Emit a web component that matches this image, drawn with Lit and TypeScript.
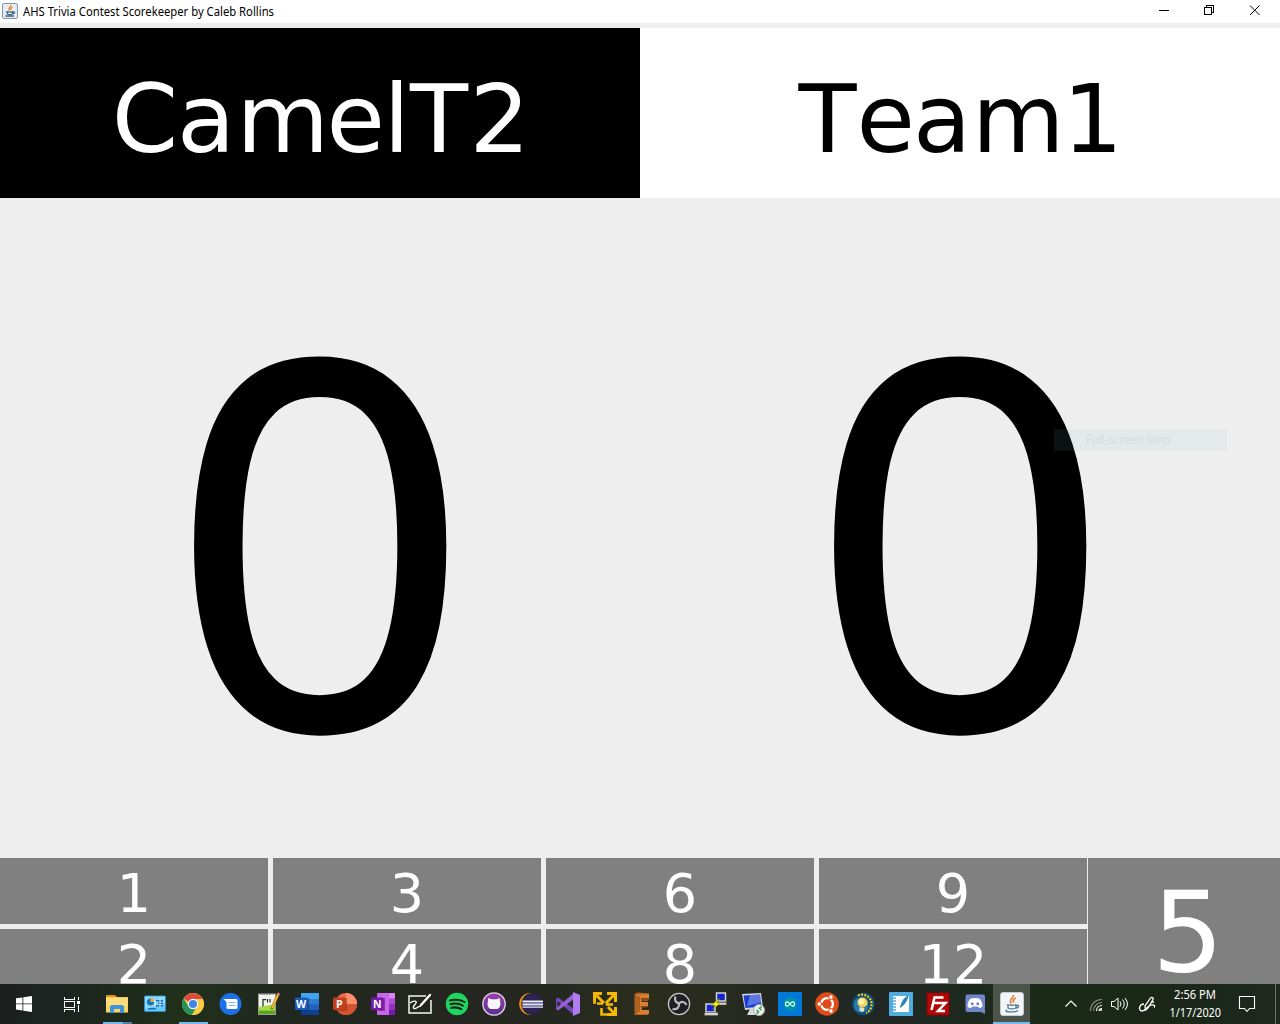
import { LitElement, html, svg, css } from "lit";
import { customElement, property } from "lit/decorators.js";

const icons: Record<string, unknown> = {
  explorer: svg`<path d="M1 3h9l2 2h10v4H1z" fill="#d99a12"/><path d="M1 5.500h22V20.500H1z" fill="#f9d568"/><path d="M1 5.500h22v8H1z" fill="#fddc7b"/><path d="M5 21v-6.500l1.500-1.500h11l1.500 1.500V21h-4v-4H9v4z" fill="#3b94d9"/>`,
  panel: svg`<rect x="1.500" y="4" width="21" height="15.500" rx="1" fill="#6bc8f5" stroke="#2d91cb"/><path d="M2 4.500h20v7L2 17z" fill="#9de0fc" opacity=".7"/><circle cx="7.500" cy="10" r="3.600" fill="#1674be"/><path d="M7.500 10V6.200a3.800 3.800 0 0 1 3.800 3.800z" fill="#f7a837"/><path d="M13 8h7v1.500h-7zm2 2.500h5V12h-5zM13 13h7v1.500h-7zM5 16h8v1.500H5z" fill="#1674be"/><path d="M12 7.500v7M17 7v8" stroke="#fff" stroke-width=".8"/>`,
  chrome: svg`<circle cx="12" cy="12" r="11" fill="#f8c940"/><path d="M12 12L2.500 6.400A11 11 0 0 1 21.600 7H12z" fill="#d94a40"/><path d="M2.500 6.400A11 11 0 0 0 11 23l5-8.500-8.500-.2z" fill="#24955a"/><path d="M12 7h9.600A11 11 0 0 1 11 23l5.300-8.500z" fill="#f9cc45"/><circle cx="12" cy="12" r="5.200" fill="#fff"/><circle cx="12" cy="12" r="4.100" fill="#4285e8"/>`,
  messages: svg`<circle cx="11.500" cy="12" r="11" fill="#1b72e8"/><path d="M4.500 7h12.500a1.500 1.500 0 0 1 1.500 1.500v7a1.500 1.500 0 0 1-1.500 1.500h-8a1.500 1.500 0 0 1-1.500-1.500V10z" fill="#fff"/><path d="M9.500 10.500h7M9.500 13.500h7" stroke="#8ab5f4" stroke-width="1.200"/>`,
  notepad: svg`<rect x="1.500" y="2" width="17" height="20.500" fill="#f2f4ee" stroke="#9ca197"/><path d="M2 15l16-3v10H2z" fill="#a7dc47"/><path d="M2 18.500h16V22H2z" fill="#58a81f"/><path d="M4 1v2m3-2v2m3-2v2m3-2v2" stroke="#777"/><path d="M6 7v7.500M6 7.700h3M10.500 7v3.500M13 7v3.500" stroke="#252b22" stroke-width="1.200"/><path d="M21.500 1.500L14.500 17" stroke="#8a6320" stroke-width="2.800"/><path d="M21 3L15 16" stroke="#f3bc2d" stroke-width="1.900"/><path d="M21.800 1l-.8 2" stroke="#e87878" stroke-width="2.800"/>`,
  word: svg`<rect x="6" y="1" width="18" height="22" rx="1" fill="#2160b8"/><path d="M6 1h18v6H6z" fill="#41a5ee"/><path d="M6 7h18v5.500H6z" fill="#2b7cd3"/><path d="M6 18h18v5H6z" fill="#103f91"/><path d="M7 6h7v13H7z" fill="#10366e" opacity=".6"/><rect x="0" y="5.500" width="12.500" height="12.500" rx="1" fill="#185abd"/><text x="6.200" y="15.600" text-anchor="middle">W</text>`,
  powerpoint: svg`<circle cx="13" cy="12" r="11" fill="#ed6c47"/><path d="M13 1a11 11 0 0 1 11 11H13z" fill="#ff8f6b"/><path d="M2 12h22a11 11 0 0 1-22 0z" fill="#d35230"/><path d="M5 6h9v13H5z" fill="#7e2815" opacity=".5"/><rect x="0" y="5.500" width="12.500" height="12.500" rx="1" fill="#c43e1c"/><text x="6.300" y="15.600" text-anchor="middle">P</text>`,
  onenote: svg`<rect x="6" y="1" width="18" height="22" rx="1" fill="#ca64ea"/><path d="M18 1h6v5.500h-6z" fill="#d982f0"/><path d="M18 6.500h6V12h-6z" fill="#ae4bd5"/><path d="M18 12h6v5.500h-6z" fill="#9332bf"/><path d="M18 17.500h6V23h-6z" fill="#7719aa"/><path d="M7 6h7v13H7z" fill="#58157e" opacity=".6"/><rect x="0" y="5.500" width="12.500" height="12.500" rx="1" fill="#7719aa"/><text x="6.300" y="15.600" text-anchor="middle">N</text>`,
  whiteboard: svg`<path d="M18 4H1v17h22V8" fill="none" stroke="#f5f5f5" stroke-width="1.500"/><path d="M2 11c4-3 7-2 6 0-1 2-4 4-2 5.500 2 1 4-2.500 7-2.500" fill="none" stroke="#fff" stroke-width="1.400"/><path d="M22 3l-9 10" stroke="#fff" stroke-width="2.400" stroke-linecap="round"/>`,
  spotify: svg`<circle cx="12" cy="12" r="11.200" fill="#1fd660"/><path d="M5 8.500c5-1.500 10-1 14.500 1.500M5.500 12.300c4.500-1.300 8.500-.8 12.300 1.400M6.200 15.900c3.700-1 7-.6 10.200 1.200" fill="none" stroke="#18251b" stroke-width="2" stroke-linecap="round"/>`,
  github: svg`<defs><linearGradient id="gh" x2="0" y2="1"><stop stop-color="#a33bb5"/><stop offset="1" stop-color="#57308e"/></linearGradient></defs><circle cx="12" cy="12" r="11.200" fill="url(#gh)" stroke="#d8d0dd" stroke-width="1.300"/><path d="M6.500 6l3 1.300h5l3-1.300c.8 2 .6 3 .6 3.500 1 3.500-.3 6.500-2.600 7.500h-7c-2.300-1-3.600-4-2.600-7.500 0-.5-.2-1.500.6-3.500z" fill="#f7f5f8"/>`,
  eclipse: svg`<circle cx="11.200" cy="12" r="11" fill="#f7941e"/><circle cx="13.300" cy="12" r="11" fill="#24271f"/><circle cx="13.300" cy="12" r="10.300" fill="#2c2255"/><path d="M3.500 8.500h20.500v1.800H3.500zm0 3h20.500v1.800H3.500zm0 3h20.500v1.200H3.500z" fill="#e8e9f3"/><path d="M3.500 10.200h20.500v1.300H3.500zm0 3h20.500v1.200H3.500z" fill="#8d93c2"/>`,
  visualstudio: svg`<path d="M0 7l2-1.500L18 17V23L1.500 9v7L0 15.500z" fill="#7648bd"/><path d="M0 17l2 1.500L18 7V1L1.500 15z" fill="#9262d3"/><path d="M17 0l7 3v18l-7 3z" fill="#b17cf0"/>`,
  vmware: svg`<g fill="none" stroke="#f5b800" stroke-width="3"><path d="M1.500 10V1.500H9M14 1.500h8.500V10M3 3l8 8M21.500 2.500L13 11M22.500 15v7.500H14M22 22l-7-7"/><path d="M1.500 10v2M4 11.500h6M14 10v2.500h6M8.500 16v6.500H14" stroke-width="2.600"/></g>`,
  easel: svg`<path d="M4.500 2l3-1.500 11.500 1v6l-2 1.500h-5v2h5v4h-5v3h7l-1 5H4.500z" fill="#b76520"/><path d="M5 3l14-1v4h-8v4h7v4h-7v4h8v4H5z" fill="#d88136"/><path d="M5 3l5 2v14l-5 4z" fill="#ad601f"/><path d="M11 6h8v2l-8 1zM11 14h7v1l-7 1z" fill="#8b4a15"/>`,
  obs: svg`<circle cx="12" cy="12" r="10.600" fill="#202024" stroke="#c8c8c8" stroke-width="1.200"/><path d="M8.500 4.500c-1.500 4 .5 6 3.500 7M12 11.500c2.500-2.500 6-2 7.500 1.500M12 11.500c.5 4-2 6.500-6.500 5.500" fill="none" stroke="#bdbdbf" stroke-width="2.200"/>`,
  putty: svg`<path d="M12.500 1h9v8h-9zM2 12h9v8H2z" fill="#1022d5" stroke="#d5d5cd" stroke-width="1.500"/><path d="M10 10.500h12.500v2.500H10zM.500 20.500h13.500v3H.5z" fill="#d6d6cf" stroke="#555" stroke-width=".6"/><path d="M16 6L7 13.500l4.500-.5-3 5 8-7.500-4 .5z" fill="#ffff18" stroke="#777900" stroke-width=".5"/>`,
  remote: svg`<path d="M1 2l19-1 2 15-18 2z" fill="#d4d6da"/><path d="M2.500 3.500L19 2.500l1.500 12L4.500 16z" fill="#183bd0"/><path d="M9 3l10-.5 1 8L6 14z" fill="#9fb4f5" opacity=".5"/><path d="M9 17l6 0v4l4 2H6z" fill="#d9d9dc"/><circle cx="18" cy="18" r="5.500" fill="#eee" stroke="#aaa"/><path d="M15.500 18l2 1.800-2 2M20.500 14.500l-2 1.800 2 2" fill="none" stroke="#2c9d45" stroke-width="1.400"/>`,
  arduino: svg`<path d="M0 0h24v24H0z" fill="#0078d7"/><circle cx="12" cy="12" r="6.500" fill="#00979c"/><path d="M12 12c-2.500-3.500-4.500-2-4.500 0s2 3.500 4.500 0 4.500-2 4.500 0-2 3.500-4.500 0z" fill="none" stroke="#e7ffff" stroke-width="1.200"/>`,
  ubuntu: svg`<circle cx="12" cy="12" r="11.800" fill="#de4c19"/><circle cx="12" cy="12" r="5.800" fill="none" stroke="#fff" stroke-width="2.500"/><path d="M12 12H3m9 0l4.500-8m-4.500 8l4.500 8" stroke="#de4c19" stroke-width="1.600"/><circle cx="12" cy="12" r="4.500" fill="#de4c19"/><g fill="#fff" stroke="#de4c19"><circle cx="4.300" cy="12" r="2.300"/><circle cx="16" cy="5" r="2.300"/><circle cx="16" cy="19" r="2.300"/></g>`,
  bulb: svg`<circle cx="11.500" cy="12" r="11.300" fill="#0c4b78"/><circle cx="9" cy="13" r="7.500" fill="#267bac"/><path d="M6 3.500A9.500 9.500 0 1 1 14 21" fill="none" stroke="#e7c51d" stroke-width="2.400" stroke-dasharray="2 1.200"/><circle cx="10.500" cy="10.500" r="5" fill="#f9d050"/><circle cx="9.500" cy="9.500" r="3" fill="#fff0a5"/><path d="M7.500 15l5 1-1 4-4-1z" fill="#e3e2cd"/>`,
  journal: svg`<rect width="24" height="24" rx="1" fill="#51ade0"/><path d="M4 4h16v16H4z" fill="#fff"/><path d="M3 6h4M3 9h4M3 12h4M3 15h4M3 18h4" stroke="#51ade0" stroke-width="1.300"/><path d="M19.500 3c-5 3-7.500 7-8.500 13 4-2.500 8-7 8.500-13z" fill="#2a82b6"/>`,
  filezilla: svg`<rect x="1" y="1" width="22" height="22" fill="#b40707" stroke="#810606" stroke-width="1.600" stroke-dasharray="2 1"/><path d="M5.500 18L8.500 5.500h9M7.200 11h6.300M12.500 11h7l-7.500 8h7" fill="none" stroke="#fff" stroke-width="2.500"/>`,
  discord: svg`<path d="M4.500 2.500h15.500a2 2 0 0 1 2 2v17.500l-4-2H4.500a2 2 0 0 1-2-2V4.500a2 2 0 0 1 2-2z" fill="#7185ca"/><path d="M7 7c3-1.500 7-1.500 10 0 2 3 2.500 5 2.500 7.500-1 1.200-2.500 1.500-3.500 1.500l-1-1.500H9L8 16c-1 0-2.500-.3-3.500-1.500C4.500 12 5 10 7 7z" fill="#fff"/><circle cx="9.200" cy="11.800" r="1.500" fill="#7185ca"/><circle cx="14.800" cy="11.800" r="1.500" fill="#7185ca"/>`,
  java: svg`<rect x=".5" y=".5" width="23" height="23" rx="2.500" fill="#f3f5f6" stroke="#c6cdd2"/><path d="M13.500 3c1 3-6 4-2 8.500M16 6c-4 1.500-3 3-2 4.500" fill="none" stroke="#e8762d" stroke-width="1.600"/><path d="M7 12.500c2 1 7 1 9.500 0M8 13v3c2 1.200 5 1.200 8 0v-3m0 .5c4-1 3 2.500 0 2.500M7 18.200c-5 2 9 2.500 11 .2" fill="none" stroke="#4f7796" stroke-width="1.300"/>`,
  javaSmall: svg`<rect x=".8" y=".8" width="22.400" height="22.400" rx="2" fill="#e9eef2" stroke="#7c95aa" stroke-width="1.500"/><path d="M13.500 3c1 3-6 4-2 8.500M16 6c-4 1.500-3 3-2 4.500" fill="none" stroke="#e8862d" stroke-width="2"/><path d="M6 13c2 1 8 1 10.500 0M8 13v3.500c2 1.200 5 1.200 8 0V13m0 .5c4-1 4 2.500 0 2.500M5 19.500h13" fill="none" stroke="#3f6788" stroke-width="1.900"/>`,
};

const pinned = [
  "explorer", "panel", "chrome", "messages", "notepad", "word", "powerpoint", "onenote", "whiteboard",
  "spotify", "github", "eclipse", "visualstudio", "vmware", "easel", "obs", "putty", "remote",
  "arduino", "ubuntu", "bulb", "journal", "filezilla", "discord", "java",
];

@customElement("app-icon")
class AppIcon extends LitElement {
  @property() name = "";
  @property({ type: Number }) size = 24;
  static styles = css`
    :host { display: block; }
    svg { display: block; }
    text { font: bold 10.5px "Open Sans", sans-serif; fill: #fff; }
  `;
  render() {
    return html`<svg width=${this.size} height=${this.size} viewBox="0 0 24 24">${icons[this.name]}</svg>`;
  }
}

@customElement("app-root")
class AppRoot extends LitElement {
  static styles = css`
    :host { display: block; width: 1280px; height: 1024px; overflow: hidden; background: #eee; font-family: "DejaVu Sans", sans-serif; color: #000; }
    * { box-sizing: border-box; }
    svg { display: block; flex: none; }
    .screen { display: flex; flex-direction: column; height: 1024px; position: relative; }
    .titlebar { height: 23px; background: #fff; display: flex; flex: none; padding-left: 2px; align-items: flex-start; }
    .titlebar app-icon { margin-top: 3px; }
    .caption { margin-left: 5px; flex: 1; }
    .names { display: grid; grid-template-columns: 1fr 1fr; height: 170px; margin-top: 5px; flex: none; }
    .name { background: #000; fill: #fff; font-size: 95px; font-kerning: none; }
    .name.light { background: #fff; fill: #000; }
    .scores { display: grid; grid-template-columns: 1fr 1fr; height: 660px; flex: none; }
    .score { font-family: "Noto Sans", sans-serif; font-size: 513px; stroke: #000; stroke-width: 2px; }
    .keys { display: flex; gap: 1px; height: 126px; overflow: hidden; flex: none; }
    .grid { display: grid; grid-template-columns: repeat(4, 268px); grid-template-rows: 66px 66px; gap: 5px; flex: none; }
    .key { background: #808080; color: #fff; font-size: 54px; line-height: 66px; text-align: center; padding-top: 3px; height: 66px; }
    .big { background: #808080; color: #fff; flex: 1; font-size: 113px; line-height: 137px; text-align: center; padding-top: 6px; padding-left: 8px; }
    .taskbar { height: 40px; flex: none; display: flex; background: linear-gradient(90deg, #1c2120 0, #1d2420 70px, #20301a 180px, #20281f 270px, #24261f 440px, #252820 560px, #2b2e1c 650px, #232721 780px, #202823 900px, #1b2a17 1050px, #1b2719 1200px, #1f2920 1280px); }
    .start { width: 98px; display: flex; flex: none; align-items: center; padding-left: 16px; gap: 31px; }
    .apps { width: 932px; display: grid; grid-template-columns: repeat(7, 38px) repeat(17, 37px) 37px; flex: none; }
    .app { display: flex; flex-direction: column; align-items: center; justify-content: space-between; padding-top: 8px; }
    .app.active { background: #4c544a; }
    .line { height: 2px; width: 29px; background: #76b9ed; }
    .line.stack { background: linear-gradient(90deg, #76b9ed 20px, #507fa3 20px); }
    .active .line { width: 100%; }
    .tray { flex: 1; }
    .tray text, .caption text { font-family: "Noto Sans", sans-serif; font-size: 12px; }
    .snip { position: absolute; left: 1054px; top: 429px; width: 173px; height: 22px; background: rgba(130, 190, 225, 0.09); }
    .snip text { font-family: "Noto Sans", sans-serif; font-size: 12px; fill: #d9dadd; }
  `;

  render() {
    const score = html`<svg class="score" width="640" height="660"><text x="169.200" y="531.500" textLength="302" lengthAdjust="spacingAndGlyphs">0</text></svg>`;
    return html`<div class="screen">
      <header class="titlebar">
        <app-icon name="javaSmall" .size=${16}></app-icon>
        <svg class="caption" height="23"><text x="0" y="16" textLength="251" lengthAdjust="spacingAndGlyphs">AHS Trivia Contest Scorekeeper by Caleb Rollins</text></svg>
        <svg width="128" height="23" fill="none" stroke="#000" shape-rendering="crispEdges">
          <path d="M7 10.500h10M52.500 7.500h7v7h-7zM54.500 7V5.500h7v7H60"/>
          <path d="M98 5.500l9.500 9.500m0-9.500L98 15" shape-rendering="auto"/>
        </svg>
      </header>
      <section class="names">
        <svg class="name" width="640" height="170"><text x="111.700 177 236.500 326.500 383.500 410 469.500" y="123.500">CamelT2</text></svg>
        <svg class="name light" width="640" height="170"><text x="158.500 216.500 273 331.900 422.500" y="123.500">Team1</text></svg>
      </section>
      <section class="scores">${score}${score}</section>
      <section class="keys">
        <div class="grid">${[1, 3, 6, 9, 2, 4, 8, 12].map((n) => html`<div class="key">${n}</div>`)}</div>
        <div class="big">5</div>
      </section>
      <footer class="taskbar">
        <div class="start">
          <svg width="16" height="16" fill="#fff"><path d="M0 2.300l6.500-.9v6.100H0zM7.300 1.300L16 0v7.500H7.300zM0 8.300h6.500v6.200L0 13.600zM7.300 8.300H16V16l-8.700-1.300z"/></svg>
          <svg width="17" height="17" fill="none" stroke="#fff" shape-rendering="crispEdges"><path d="M1.500 1v2.500h10V1M1.500 5.500h10v6h-10zM1.500 16v-2.500h10V16M15.500 1v3m0 5v7"/><path d="M14 5h3v3h-3z" fill="#fff" stroke="none"/></svg>
        </div>
        <div class="apps">${pinned.map((name) => html`<div class="app ${name === "java" ? "active" : ""}">
          <app-icon name=${name}></app-icon>
          ${name === "explorer" ? html`<i class="line stack"></i>` : name === "chrome" || name === "java" ? html`<i class="line"></i>` : ""}
        </div>`)}</div>
        <svg class="tray" width="250" height="40" viewBox="1030 0 250 40" fill="none" stroke="#fff">
          <path d="M1065.500 22.500l5.500-5.500 5.500 5.500" stroke-width="1.200"/>
          <g stroke-width="1.100"><path d="M1090.500 27c0-7 5-11.500 11.500-11.500M1093.500 27c0-5 4-8.500 8.500-8.500" stroke="#92988f"/><path d="M1096.500 27c0-3.500 2.500-5.500 5.500-5.500M1099 27c0-1.500 1-2.500 3-2.500"/></g><circle cx="1101" cy="26" r="1" fill="#fff" stroke="none"/>
          <path d="M1111.500 17.500h2.500l4-3.500v12l-4-3.500h-2.500zM1120 17.500q2 2.500 0 5M1122.500 15.500q3.500 4.500 0 9M1125 14q5 6 0 12"/>
          <path d="M1145.500 26l-.5-4 5.500-8c1-1.500 3.500 0 2.500 1.500l-5 8.500zM1144 20c-5 0-6 7-2 7 3 0 4-3 7-5 4-2.500 7-.5 5 1.500M1151 18h3" stroke-width="1.300"/>
          <g fill="#fff" stroke="none"><text x="1174" y="15" textLength="42" lengthAdjust="spacingAndGlyphs">2:56 PM</text><text x="1169.500" y="33" textLength="51.500" lengthAdjust="spacingAndGlyphs">1/17/2020</text></g>
          <path d="M1239.500 12.500h15v12h-5l-2.500 3-2.500-3h-5z" stroke-width="1.100"/>
          <path d="M1275.500 0v40" stroke="#6c736b"/>
        </svg>
      </footer>
      <div class="snip"><svg width="173" height="22"><text x="32" y="15" textLength="84" lengthAdjust="spacingAndGlyphs">Full-screen Snip</text></svg></div>
    </div>`;
  }
}
